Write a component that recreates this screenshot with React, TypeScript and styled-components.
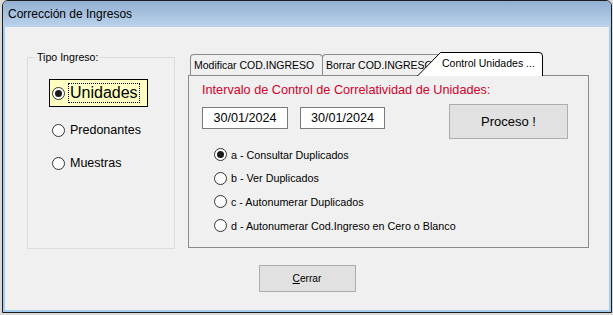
import React from 'react';
import styled, { createGlobalStyle } from 'styled-components';

const GlobalStyle = createGlobalStyle`
  body {
    margin: 0;
    background: #dadada;
    font-family: "Liberation Sans", Arial, sans-serif;
    color: #000;
  }
`;

const Window = styled.div`
  margin-left: 2px;
  width: 610px;
  height: 313px;
  box-sizing: border-box;
  border: 1px solid #1c1c1c;
  border-radius: 6px 6px 0 0;
  overflow: hidden;
  display: flex;
  flex-direction: column;
  background: #f0f0f0;
`;

const TitleBar = styled.div`
  height: 26px;
  flex: none;
  display: flex;
  align-items: center;
  padding-left: 5px;
  background: linear-gradient(#93b0d2, #bad2eb);
  font-size: 12px;
`;

const ClientArea = styled.div`
  flex: 1;
  display: flex;
  flex-direction: column;
  border: 2px solid #a7cdee;
  border-top: none;
`;

const TopRow = styled.div`
  display: flex;
  align-items: flex-start;
  padding-left: 22px;
`;

const GroupBox = styled.div`
  position: relative;
  margin-top: 30px;
  width: 148px;
  height: 192px;
  box-sizing: border-box;
  border: 1px solid #dcdcdc;
`;

const Caption = styled.span`
  position: absolute;
  top: -7px;
  left: 8px;
  padding: 0 1px;
  background: #f0f0f0;
  font-size: 10.6px;
  line-height: 13px;
`;

const OptionList = styled.div`
  display: flex;
  flex-direction: column;
  align-items: flex-start;
  padding: 21px 0 0 21px;
`;

const Radio = styled.span<{ $checked?: boolean }>`
  flex: none;
  width: 13px;
  height: 13px;
  box-sizing: border-box;
  border-radius: 50%;
  border: 1px solid #333;
  background: #fff;
  display: flex;
  align-items: center;
  justify-content: center;

  &::after {
    content: '';
    display: ${(p) => (p.$checked ? 'block' : 'none')};
    width: 7px;
    height: 7px;
    border-radius: 50%;
    background: #1a1a1a;
  }
`;

const HighlightOption = styled.div`
  width: 99px;
  height: 28px;
  box-sizing: border-box;
  border: 1px solid #000;
  background: #ffffc2;
  display: flex;
  align-items: center;
  padding-left: 2px;
`;

const FocusText = styled.span`
  margin-left: 3px;
  padding: 0 1px;
  border: 1px dotted #000;
  font-size: 16px;
  line-height: 18px;
`;

const TypeOption = styled.div`
  margin-top: 13px;
  height: 20px;
  display: flex;
  align-items: center;
  padding-left: 3px;
  font-size: 12.5px;

  span + span {
    margin-left: 5px;
  }
`;

const TabControl = styled.div`
  margin: 24px 0 0 13px;
  width: 401px;
  display: flex;
  flex-direction: column;
`;

const TabRow = styled.div`
  height: 24px;
  display: flex;
  align-items: flex-end;
  padding-left: 2px;
`;

const Tab = styled.div<{ $w: number }>`
  width: ${(p) => p.$w}px;
  height: 21px;
  box-sizing: border-box;
  border: 1px solid #8a8a8a;
  border-bottom: none;
  border-radius: 4px 4px 0 0;
  background: #f0f0f0;
  display: flex;
  align-items: center;
  padding-left: 3px;
  font-size: 10.5px;
  white-space: nowrap;
  overflow: hidden;

  & + & {
    margin-left: -1px;
  }
`;

const ActiveTab = styled.div`
  position: relative;
  z-index: 1;
  width: 127px;
  height: 25px;
  margin: 0 0 -1px -29px;
  display: flex;
  align-items: flex-start;
  font-size: 10.5px;
  white-space: nowrap;

  svg {
    position: absolute;
    inset: 0;
  }

  span {
    position: relative;
    padding: 5px 0 0 25px;
    line-height: 14px;
  }
`;

const Panel = styled.div`
  height: 173px;
  box-sizing: border-box;
  border: 1px solid #8a8a8a;
  padding-left: 13px;
  display: flex;
  flex-direction: column;
`;

const PanelLabel = styled.div`
  margin-top: 6px;
  color: #d3002b;
  font-size: 12.7px;
  line-height: 16px;
  white-space: nowrap;
`;

const DateRow = styled.div`
  margin-top: 6px;
  display: flex;
  align-items: flex-start;
`;

const DateBox = styled.div<{ $w: number }>`
  margin-top: 3px;
  width: ${(p) => p.$w}px;
  height: 22px;
  box-sizing: border-box;
  border: 1px solid #7a7a7a;
  background: #fff;
  display: flex;
  align-items: center;
  justify-content: center;
  font-size: 12.6px;

  & + & {
    margin-left: 12px;
  }
`;

const Button = styled.button<{ $w: number; $h: number; $size: number }>`
  width: ${(p) => p.$w}px;
  height: ${(p) => p.$h}px;
  padding: 0;
  border: 1px solid #adadad;
  border-radius: 0;
  background: #e1e1e1;
  color: #000;
  font-family: inherit;
  font-size: ${(p) => p.$size}px;
`;

const ProcesoButton = styled(Button)`
  margin-left: 64px;
`;

const ActionList = styled.div`
  margin-top: 4px;
  padding-left: 12px;
  display: flex;
  flex-direction: column;
`;

const ActionOption = styled.div`
  height: 23.6px;
  display: flex;
  align-items: center;
  font-size: 10.75px;

  span + span {
    margin-left: 4px;
  }
`;

const ButtonRow = styled.div`
  margin-top: 16px;
  display: flex;
  justify-content: center;
`;

const actions = [
  'a - Consultar Duplicados',
  'b - Ver Duplicados',
  'c - Autonumerar Duplicados',
  'd - Autonumerar Cod.Ingreso en Cero o Blanco',
];

export default function App() {
  return (
    <>
      <GlobalStyle />
      <Window>
        <TitleBar>Corrección de Ingresos</TitleBar>
        <ClientArea>
          <TopRow>
            <GroupBox>
              <Caption>Tipo Ingreso:</Caption>
              <OptionList>
                <HighlightOption>
                  <Radio $checked />
                  <FocusText>Unidades</FocusText>
                </HighlightOption>
                <TypeOption>
                  <Radio />
                  <span>Predonantes</span>
                </TypeOption>
                <TypeOption>
                  <Radio />
                  <span>Muestras</span>
                </TypeOption>
              </OptionList>
            </GroupBox>

            <TabControl>
              <TabRow>
                <Tab $w={133}>Modificar COD.INGRESO</Tab>
                <Tab $w={124}>Borrar COD.INGRESO</Tab>
                <ActiveTab>
                  <svg width="127" height="25" viewBox="0 0 127 25">
                    <path
                      d="M0.5 25 L23.5 1.5 H122 Q125.5 1.5 125.5 5 V25"
                      fill="#fff"
                      stroke="#000"
                      strokeWidth="1"
                    />
                  </svg>
                  <span>Control Unidades ...</span>
                </ActiveTab>
              </TabRow>
              <Panel>
                <PanelLabel>Intervalo de Control de Correlatividad de Unidades:</PanelLabel>
                <DateRow>
                  <DateBox $w={86}>30/01/2024</DateBox>
                  <DateBox $w={85}>30/01/2024</DateBox>
                  <ProcesoButton $w={119} $h={35} $size={13}>
                    Proceso !
                  </ProcesoButton>
                </DateRow>
                <ActionList>
                  {actions.map((a, i) => (
                    <ActionOption key={a}>
                      <Radio $checked={i === 0} />
                      <span>{a}</span>
                    </ActionOption>
                  ))}
                </ActionList>
              </Panel>
            </TabControl>
          </TopRow>

          <ButtonRow>
            <Button $w={97} $h={27} $size={10.2}>
              <u>C</u>errar
            </Button>
          </ButtonRow>
        </ClientArea>
      </Window>
    </>
  );
}
